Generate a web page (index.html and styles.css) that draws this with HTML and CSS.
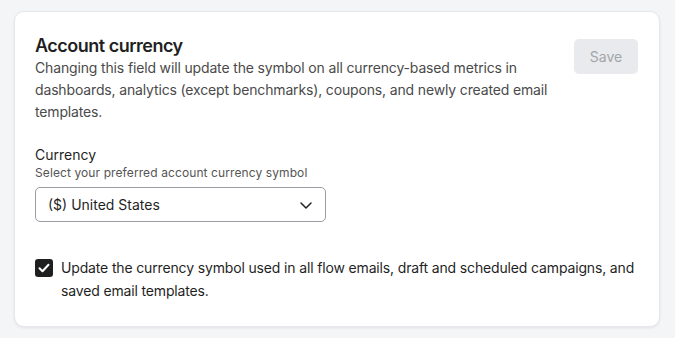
FILE: index.html
```html
<!DOCTYPE html>
<html lang="en">
<head>
  <meta charset="UTF-8">
  <title>Account currency</title>
  <link rel="stylesheet" href="styles.css">
</head>
<body>
  <div class="card">
    <div class="header">
      <div class="intro">
        <h2>Account currency</h2>
        <p>Changing this field will update the symbol on all currency-based metrics in dashboards, analytics (except benchmarks), coupons, and newly created email templates.</p>
      </div>
      <button class="save" disabled>Save</button>
    </div>

    <div class="field">
      <label for="currency">Currency</label>
      <div class="hint">Select your preferred account currency symbol</div>
      <div class="select" id="currency">
        <span>($) United States</span>
        <svg width="14" height="14" viewBox="0 0 14 14"><path d="M2 5l5 5 5-5" fill="none" stroke="#222" stroke-width="1.5" stroke-linecap="round" stroke-linejoin="round"/></svg>
      </div>
    </div>

    <div class="check">
      <span class="box">
        <svg width="18" height="18" viewBox="0 0 18 18"><path d="M4.5 9.2l3 3 6-6.4" fill="none" stroke="#fff" stroke-width="2" stroke-linecap="round" stroke-linejoin="round"/></svg>
      </span>
      <span class="check-text">Update the currency symbol used in all flow emails, draft and scheduled campaigns, and saved email templates.</span>
    </div>
  </div>
</body>
</html>
```

FILE: styles.css
```css
body {
  margin: 0;
  padding: 11px 15px 12px 14px;
  background-color: #f4f5f6;
  font-family: Inter, "Noto Sans", sans-serif;
  color: #1f1f1f;
}
.card {
  background-color: white;
  border: 1px solid #e6e8eb;
  border-radius: 10px;
  box-shadow: 0 1px 3px rgba(0, 0, 0, 0.08);
  padding: 23px 21px 24px 20px;
}
.header {
  display: flex;
  justify-content: space-between;
  align-items: flex-start;
  gap: 20px;
}
h2 {
  margin: 0;
  font-size: 18px;
  font-weight: 600;
  line-height: 22px;
  letter-spacing: -0.5px;
}
.intro p {
  margin: 0;
  font-size: 14px;
  line-height: 22px;
  letter-spacing: -0.15px;
  color: #4a4a4a;
}
.save {
  margin-top: 4px;
  width: 64px;
  height: 35px;
  border: none;
  border-radius: 5px;
  background-color: #e8eaed;
  color: #a3a6ab;
  font-family: inherit;
  font-size: 14px;
  flex-shrink: 0;
}
.field {
  margin-top: 22px;
}
label {
  display: block;
  font-size: 14px;
  line-height: 20px;
}
.hint {
  font-size: 12px;
  line-height: 16px;
  letter-spacing: 0.1px;
  color: #555;
  margin-bottom: 6px;
}
.select {
  width: 291px;
  height: 35px;
  box-sizing: border-box;
  border: 1px solid #9a9ea3;
  border-radius: 5px;
  display: flex;
  align-items: center;
  justify-content: space-between;
  padding: 0 12px;
  font-size: 14px;
}
.check {
  margin-top: 36px;
  display: flex;
  gap: 8px;
  align-items: flex-start;
}
.box {
  width: 18px;
  height: 18px;
  border-radius: 3px;
  background-color: #1f1f1f;
  flex-shrink: 0;
  display: flex;
  margin-top: 1px;
}
.check-text {
  font-size: 14px;
  line-height: 23px;
  letter-spacing: -0.15px;
  margin-top: -2px;
}
```
